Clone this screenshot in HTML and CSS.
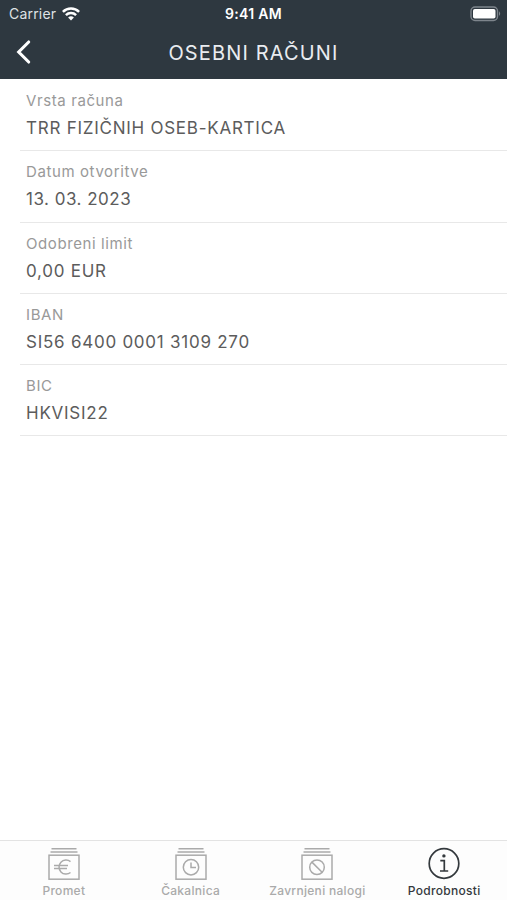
FILE: index.html
```
<!DOCTYPE html>
<html lang="sl">
<head>
    <meta charset="UTF-8">
    <meta name="viewport" content="width=device-width, initial-scale=1.0">
    <title>Osebni računi</title>
    <link rel="stylesheet" href="styles.css">
</head>
<body>

    <header class="header">
        <div class="status-bar">
            <div class="carrier">
                <span>Carrier</span>
                <svg class="wifi" width="18" height="14" viewBox="0 0 18 14" fill="none" stroke="#fff" stroke-width="2.5">
                    <path d="M0.9 4.8a11.6 11.6 0 0 1 16.2 0"/>
                    <path d="M3.9 8.2a7.3 7.3 0 0 1 10.2 0"/>
                    <path d="M9 13.6L6.1 10.6a4.2 4.2 0 0 1 5.8 0z" fill="#fff" stroke="none"/>
                </svg>
            </div>
            <div class="clock">9:41 AM</div>
            <div class="battery">
                <svg width="32" height="16" viewBox="0 0 32 16">
                    <rect x="1" y="1" width="26.5" height="13.5" rx="4" fill="none" stroke="#7e858c" stroke-width="1.4"/>
                    <rect x="3" y="3" width="22.5" height="9.5" rx="1.8" fill="#fff"/>
                    <path d="M29 5.3q2.4 2.4 0 4.8z" fill="#7e858c"/>
                </svg>
            </div>
        </div>
        <div class="nav-bar">
            <a class="back" href="#" aria-label="Nazaj">
                <svg width="18" height="26" viewBox="0 0 18 26" fill="none" stroke="#fff" stroke-width="3.1" stroke-linecap="round">
                    <path d="M13.7 3L3.7 13l10 10"/>
                </svg>
            </a>
            <h1 class="title">OSEBNI RAČUNI</h1>
        </div>
    </header>

    <main class="details">
        <div class="row">
            <div class="label">Vrsta računa</div>
            <div class="value">TRR FIZIČNIH OSEB-KARTICA</div>
        </div>
        <div class="row">
            <div class="label">Datum otvoritve</div>
            <div class="value numeric">13. 03. 2023</div>
        </div>
        <div class="row">
            <div class="label">Odobreni limit</div>
            <div class="value">0,00 EUR</div>
        </div>
        <div class="row">
            <div class="label">IBAN</div>
            <div class="value">SI56 6400 0001 3109 270</div>
        </div>
        <div class="row">
            <div class="label">BIC</div>
            <div class="value">HKVISI22</div>
        </div>
    </main>

    <nav class="tab-bar">
        <a class="tab" href="#">
            <svg width="32" height="34" viewBox="0 0 32 34" fill="none" stroke="currentColor" stroke-width="1.5">
                <path d="M3.5 1.7h25M2.5 5h27"/>
                <rect x="1" y="8.2" width="30" height="24"/>
                <path d="M22.5 14.7a7 7 0 1 0 0 10.8M6 18.4h14M6 21.6h13"/>
            </svg>
            <span>Promet</span>
        </a>
        <a class="tab" href="#">
            <svg width="32" height="34" viewBox="0 0 32 34" fill="none" stroke="currentColor" stroke-width="1.5">
                <path d="M3.5 1.7h25M2.5 5h27"/>
                <rect x="1" y="8.2" width="30" height="24"/>
                <circle cx="16" cy="20.2" r="7.7"/>
                <path d="M16 15.5v5h5"/>
            </svg>
            <span>Čakalnica</span>
        </a>
        <a class="tab" href="#">
            <svg width="32" height="34" viewBox="0 0 32 34" fill="none" stroke="currentColor" stroke-width="1.5">
                <path d="M3.5 1.7h25M2.5 5h27"/>
                <rect x="1" y="8.2" width="30" height="24"/>
                <circle cx="16" cy="20.2" r="7.3"/>
                <path d="M10.9 15.1l10.2 10.2"/>
            </svg>
            <span>Zavrnjeni nalogi</span>
        </a>
        <a class="tab active" href="#">
            <svg width="32" height="34" viewBox="0 0 32 34" fill="none" stroke="currentColor" stroke-width="1.7">
                <circle cx="16" cy="16.5" r="14.8"/>
                <path d="M12.3 13.6h4v10.4M12 24h8.2"/>
                <circle cx="15.9" cy="8.9" r="1.7" fill="currentColor" stroke="none"/>
            </svg>
            <span>Podrobnosti</span>
        </a>
    </nav>

</body>
</html>
```
FILE: styles.css
```
body {
    margin: 0;
    height: 900px;
    display: flex;
    flex-direction: column;
    background-color: #fff;
    font-family: Inter, "Noto Sans", sans-serif;
    overflow: hidden;
}

a {
    color: inherit;
    text-decoration: none;
}

svg {
    display: block;
}

.header {
    height: 79px;
    flex: none;
    background-color: #2e3840;
    color: #fff;
}

.status-bar {
    display: grid;
    grid-template-columns: 1fr auto 1fr;
    align-items: center;
    height: 27px;
}

.carrier {
    display: flex;
    align-items: center;
    gap: 6px;
    padding-left: 9px;
    font-size: 14px;
    letter-spacing: 0.2px;
    color: #dfe2e5;
}

.clock {
    font-size: 14px;
    font-weight: 600;
    letter-spacing: 0.3px;
}

.battery {
    justify-self: end;
    padding-right: 5px;
}

.nav-bar {
    display: grid;
    grid-template-columns: 60px 1fr 60px;
    align-items: center;
    height: 50px;
}

.back {
    padding-left: 15px;
}

.title {
    margin: 0;
    padding-top: 1px;
    font-size: 20px;
    font-weight: 400;
    letter-spacing: 1.15px;
    text-align: center;
    color: #e9ecf0;
}

.details {
    flex: 1;
    padding: 1px 0 0 20px;
}

.row {
    box-sizing: border-box;
    height: 71.25px;
    padding: 11px 0 0 6px;
    border-bottom: 1px solid #e8e8e8;
}

.label {
    font-size: 15px;
    line-height: 20px;
    letter-spacing: 0.6px;
    color: #999;
}

.value {
    margin-top: 4px;
    font-size: 17px;
    line-height: 26px;
    letter-spacing: 0.75px;
    color: #5c5c5c;
}

.numeric {
    letter-spacing: 0.5px;
}

.tab-bar {
    display: grid;
    grid-template-columns: repeat(4, 1fr);
    box-sizing: border-box;
    height: 60px;
    flex: none;
    border-top: 1px solid #e3e3e3;
    background-color: #fdfdfd;
}

.tab {
    display: flex;
    flex-direction: column;
    align-items: center;
    padding: 6px 0 0 1px;
    font-size: 12px;
    line-height: 16px;
    font-weight: 500;
    letter-spacing: 0.3px;
    color: #aaa;
}

.tab span {
    margin-top: 2px;
}

.active {
    color: #34393d;
}
```
